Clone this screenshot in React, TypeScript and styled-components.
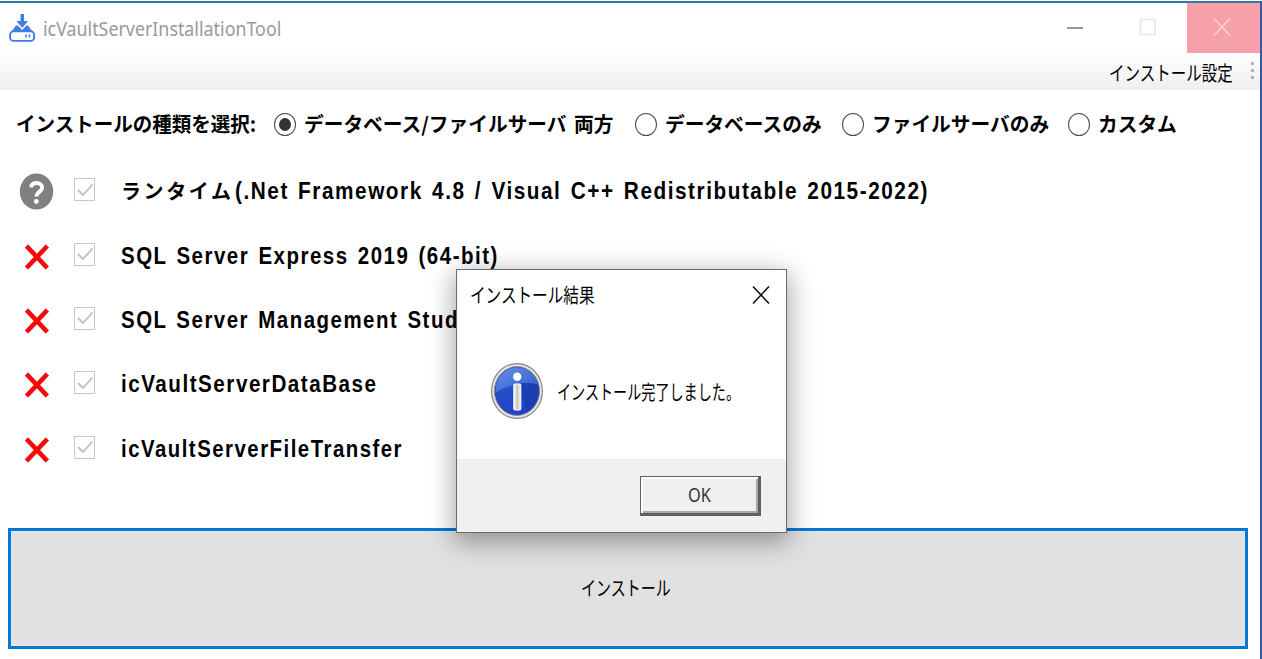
import React from "react";
import styled, { createGlobalStyle } from "styled-components";

const GlobalStyle = createGlobalStyle`
  *, *::before, *::after { box-sizing: border-box; }
  body { margin: 0; background: #fff; overflow: hidden; }
`;

const ui = `"Noto Sans", "Noto Sans CJK JP", sans-serif`;
const jp = `"Noto Sans CJK JP", sans-serif`;
const latin = `"Liberation Sans", "Noto Sans CJK JP", sans-serif`;

const Window = styled.div`
  position: relative;
  display: flex;
  flex-direction: column;
  width: 1262px;
  height: 659px;
  padding-top: 1px;
  background: #fff;
  color: #000;
`;

const Frame = styled.div`
  display: flex;
  flex-direction: column;
  flex: 1;
  border-top: 2px solid #2d7ca5;
  border-right: 2px solid #2a5fa8;
`;

const Label = styled.span<{
  $w: number;
  $size: number;
  $sx?: number;
  $ls?: number;
  $ws?: number;
  $weight?: number;
  $font?: string;
  $color?: string;
}>`
  display: block;
  flex: none;
  width: ${(p) => p.$w}px;
  font: ${(p) => p.$weight ?? 400} ${(p) => p.$size}px / 28px ${(p) => p.$font ?? jp};
  letter-spacing: ${(p) => p.$ls ?? 0}px;
  word-spacing: ${(p) => p.$ws ?? 0}px;
  color: ${(p) => p.$color ?? "#000"};
  white-space: pre;
  transform: scaleX(${(p) => p.$sx ?? 1});
  transform-origin: 0 50%;
`;

const TitleBar = styled.header`
  display: flex;
  align-items: center;
  height: 51px;
  padding-left: 9px;
  flex: none;
`;

const AppIcon = styled.svg`
  width: 27px;
  height: 30px;
  margin: 0 7px 2px 0;
  flex: none;
`;

const WindowButtons = styled.div`
  display: flex;
  height: 50px;
  margin-left: auto;
  align-self: flex-start;
`;

const WindowButton = styled.div<{ $danger?: boolean }>`
  display: grid;
  place-items: center;
  width: 73px;
  padding: 0 ${(p) => (p.$danger ? 3 : 6)}px 2px 0;
  background: ${(p) => (p.$danger ? "#f6a1a9" : "transparent")};
`;

const MenuStrip = styled.nav`
  display: flex;
  align-items: center;
  justify-content: flex-end;
  height: 36px;
  padding-top: 1px;
  flex: none;
  background: linear-gradient(#fdfdfd, #efefef);
`;

const Overflow = styled.div`
  display: flex;
  flex-direction: column;
  gap: 4px;
  width: 9px;
  margin: 0 0 4px 18px;
`;

const OverflowDot = styled.i`
  width: 3px;
  height: 3px;
  background: #b2b2b2;
`;

const TypeRow = styled.div`
  display: flex;
  align-items: center;
  height: 68px;
  padding-left: 16px;
  flex: none;
`;

const Radio = styled.span<{ $checked?: boolean; $left: number }>`
  display: grid;
  place-items: center;
  width: 22px;
  height: 23px;
  margin-right: 8px;
  margin-left: ${(p) => p.$left}px;
  flex: none;
  border: 1.5px solid #4a4a4a;
  border-radius: 50%;
  &::after {
    content: "";
    width: 12px;
    height: 13px;
    border-radius: 50%;
    background: ${(p) => (p.$checked ? "#333" : "transparent")};
  }
`;

const List = styled.ul`
  display: flex;
  flex-direction: column;
  margin: 0;
  padding: 1px 0 0;
  list-style: none;
  flex: none;
`;

const Item = styled.li`
  display: flex;
  align-items: center;
  height: 64.4px;
`;

const StatusCell = styled.div`
  display: grid;
  place-items: center;
  width: 74px;
  height: 40px;
`;

const StatusIcon = styled.svg`
  display: block;
`;

const CheckBox = styled.span`
  display: grid;
  place-items: center;
  width: 21px;
  height: 23px;
  margin: 0 26px 3px 0;
  border: 1.5px solid #c8c8c8;
`;

const ItemText = styled.div`
  display: flex;
  align-items: center;
`;

const InstallButton = styled.button`
  display: flex;
  align-items: center;
  justify-content: center;
  width: 1240px;
  height: 121px;
  margin: auto 0 10px 8px;
  padding: 0 5px 1px 0;
  border: 3px solid #0078d7;
  background: #e1e1e1;
  box-shadow: inset 0 0 0 1px #eae6e2;
`;

const Dialog = styled.section`
  position: absolute;
  left: 456px;
  top: 269px;
  display: flex;
  flex-direction: column;
  width: 331px;
  height: 264px;
  border: 1.5px solid #6a6a6a;
  background: #fff;
  box-shadow: 0 7px 24px 2px rgba(0, 0, 0, 0.36);
`;

const DialogTitle = styled.div`
  display: flex;
  align-items: center;
  justify-content: space-between;
  height: 50px;
  padding: 0 16px 0 13px;
`;

const DialogBody = styled.div`
  display: flex;
  align-items: center;
  gap: 13px;
  flex: 1;
  padding: 3px 0 0 33px;
`;

const DialogMessage = styled.div`
  padding-top: 2px;
`;

const DialogFooter = styled.div`
  display: flex;
  justify-content: flex-end;
  height: 73px;
  padding: 17px 25px 0 0;
  background: #f0f0f0;
`;

const OkButton = styled.button`
  display: flex;
  align-items: center;
  justify-content: center;
  width: 121px;
  height: 40px;
  padding: 0;
  border: 1.5px solid #606060;
  border-width: 1.5px 3px 3px 1.5px;
  background: #f0f0f0;
  box-shadow: inset 2px 2px 0 #fff, inset -2px -2px 0 #a8a8a8;
`;

function QuestionIcon() {
  return (
    <StatusIcon width="36" height="38" viewBox="0 0 36 38">
      <ellipse cx="17.5" cy="19.5" rx="16.7" ry="18" fill="#808080" />
      <path d="M12 15.4c.5-3 2.8-4.400 5.600-4.400 3.200 0 5.500 1.700 5.500 4.600 0 4.600-5.600 4-5.600 9" fill="none" stroke="#fff" strokeWidth="3.8" />
      <circle cx="17.3" cy="29.5" r="2.4" fill="#fff" />
    </StatusIcon>
  );
}

function CrossIcon() {
  return (
    <StatusIcon width="26" height="28" viewBox="0 0 26 28">
      <path d="M2.500 4 23.300 26M23.300 4 2.500 26" stroke="#9a7070" strokeWidth="5" opacity=".45" />
      <path d="M2.500 4 23.300 26M23.300 4 2.500 26" stroke="#fb0505" strokeWidth="4.300" />
    </StatusIcon>
  );
}

function InfoIcon() {
  return (
    <StatusIcon width="54" height="58" viewBox="0 0 54 58">
      <defs>
        <linearGradient id="ball" x1="0" y1="0" x2=".4" y2="1">
          <stop offset="0" stopColor="#4a7be0" />
          <stop offset=".5" stopColor="#2450c4" />
          <stop offset="1" stopColor="#2440cc" />
        </linearGradient>
        <linearGradient id="gloss" x1="0" y1="0" x2="1" y2="1">
          <stop offset="0" stopColor="#6c96ec" />
          <stop offset="1" stopColor="#3a62cc" />
        </linearGradient>
        <linearGradient id="stem">
          <stop offset="0" stopColor="#fff" />
          <stop offset=".5" stopColor="#c4c4c0" />
          <stop offset="1" stopColor="#fff" />
        </linearGradient>
      </defs>
      <ellipse cx="27" cy="29" rx="25.4" ry="27.4" fill="#e6e6e4" stroke="#858585" strokeWidth="1.2" />
      <ellipse cx="27" cy="29" rx="22.6" ry="24.4" fill="#1b3fae" stroke="#8c8c90" strokeWidth="1" />
      <ellipse cx="27" cy="29" rx="21.6" ry="23.4" fill="url(#ball)" />
      <path d="M5.600 31C5 16 14 5.800 27 5.600c11 0 19 7 21 17C35 20 17 22 5.600 31z" fill="url(#gloss)" opacity=".8" />
      <path d="M27 22c9-2 17-1.500 21.300 1 1.500 12-3 22-12 26L31 28z" fill="#16389f" opacity=".6" />
      <circle cx="27.2" cy="14.8" r="4.2" fill="#fff" />
      <rect x="23.8" y="22" width="7" height="26" rx="1" fill="url(#stem)" stroke="#fff" strokeWidth="1" />
    </StatusIcon>
  );
}

const types = [
  { label: "データベース/ファイルサーバ 両方", width: 309, left: 17, checked: true },
  { label: "データベースのみ", width: 157, left: 22 },
  { label: "ファイルサーバのみ", width: 175, left: 20 },
  { label: "カスタム", width: 80, left: 21 },
];

const items = [
  { label: "(.Net Framework 4.8 / Visual C++ Redistributable 2015-2022)", lead: "ランタイム", sx: 0.903 },
  { label: "SQL Server Express 2019 (64-bit)", sx: 0.89 },
  { label: "SQL Server Management Studio", sx: 0.889 },
  { label: "icVaultServerDataBase", sx: 0.896 },
  { label: "icVaultServerFileTransfer", sx: 0.885 },
];

export default function App() {
  return (
    <Window>
      <GlobalStyle />
      <Frame>
        <TitleBar>
          <AppIcon viewBox="0 0 27 30">
            <g fill="#3f7fe0">
              <path d="M11.500 1h3.500v7h4l-5.700 7-5.800-7h4z" />
              <path d="M7 12.500 3 18h20l-4-5.500h-1.500L13.200 17 9 12.500z" />
            </g>
            <rect x="1.1" y="18.3" width="24" height="9.6" rx="3.5" fill="#fff" stroke="#3f7fe0" strokeWidth="1.9" />
            <path d="M17 21.500v3M20.500 21.500v3" stroke="#3f7fe0" strokeWidth="1.6" />
          </AppIcon>
          <Label $w={238} $size={20} $sx={0.892} $font={ui} $color="#999">icVaultServerInstallationTool</Label>
          <WindowButtons>
            <WindowButton>
              <svg width="18" height="18" viewBox="0 0 18 18"><path d="M1 10h16" stroke="#999" strokeWidth="2" /></svg>
            </WindowButton>
            <WindowButton>
              <svg width="18" height="18" viewBox="0 0 18 18"><path d="M1.500 1.500h14.500v15H1.500z" fill="none" stroke="#e8e8e8" strokeWidth="1.6" /></svg>
            </WindowButton>
            <WindowButton $danger>
              <svg width="18" height="18" viewBox="0 0 18 18"><path d="m1 .5 16 17M17 .5l-16 17" stroke="#fcd2d6" strokeWidth="1.5" /></svg>
            </WindowButton>
          </WindowButtons>
        </TitleBar>
        <MenuStrip>
          <Label $w={124} $size={20} $sx={0.775}>インストール設定</Label>
          <Overflow><OverflowDot /><OverflowDot /><OverflowDot /></Overflow>
        </MenuStrip>
        <TypeRow>
          <Label $w={241} $size={20} $sx={0.976} $weight={700}>インストールの種類を選択:</Label>
          {types.map((t) => (
            <React.Fragment key={t.label}>
              <Radio $left={t.left} $checked={t.checked} />
              <Label $w={t.width} $size={20} $sx={0.985} $ws={3} $weight={700}>{t.label}</Label>
            </React.Fragment>
          ))}
        </TypeRow>
        <List>
          {items.map((it) => (
            <Item key={it.label}>
              <StatusCell>{it.lead ? <QuestionIcon /> : <CrossIcon />}</StatusCell>
              <CheckBox>
                <svg width="18" height="18" viewBox="0 0 18 18"><path d="m2 9 5 5L16.500 3.500" fill="none" stroke="#bdbdbd" strokeWidth="1.8" /></svg>
              </CheckBox>
              <ItemText>
                {it.lead && <Label $w={114} $size={20} $ls={2.6} $weight={700}>{it.lead}</Label>}
                <Label $w={300} $size={23} $sx={it.sx} $ls={1.7} $ws={2.2} $weight={700} $font={latin}>
                  {it.label}
                </Label>
              </ItemText>
            </Item>
          ))}
        </List>
        <InstallButton>
          <Label $w={90} $size={20} $sx={0.75}>インストール</Label>
        </InstallButton>
      </Frame>
      <Dialog>
        <DialogTitle>
          <Label $w={124} $size={20} $sx={0.78}>インストール結果</Label>
          <svg width="18" height="20" viewBox="0 0 18 20"><path d="m1 1.500 16 17M17 1.500l-16 17" stroke="#111" strokeWidth="1.6" /></svg>
        </DialogTitle>
        <DialogBody>
          <InfoIcon />
          <DialogMessage>
            <Label $w={180} $size={20} $sx={0.705}>インストール完了しました。</Label>
          </DialogMessage>
        </DialogBody>
        <DialogFooter>
          <OkButton>
            <Label $w={24} $size={19} $sx={0.86} $font={ui} $color="#333">OK</Label>
          </OkButton>
        </DialogFooter>
      </Dialog>
    </Window>
  );
}
